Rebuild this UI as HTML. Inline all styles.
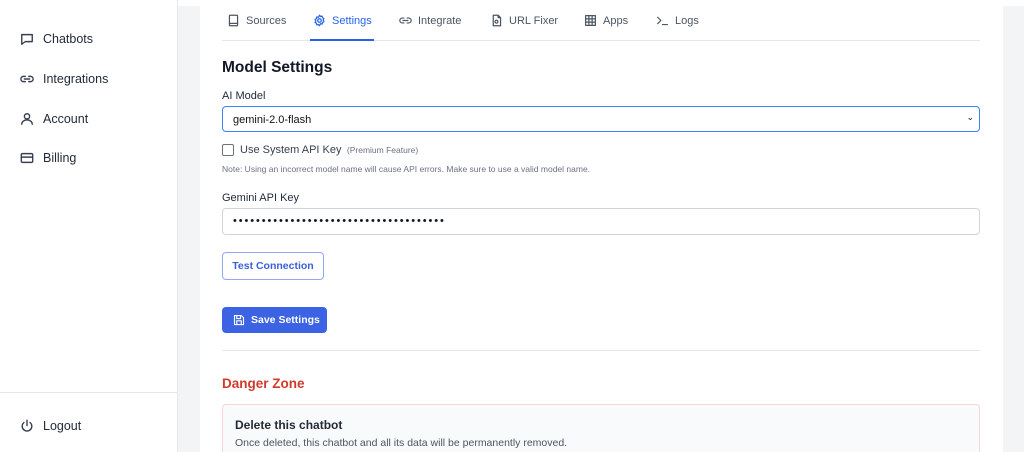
<!DOCTYPE html>
<html><head><style>
*{box-sizing:border-box;margin:0;padding:0}
html,body{width:1024px;height:452px;overflow:hidden}
body{background:#f3f4f6;font-family:"Liberation Sans",sans-serif;color:#111827;position:relative}
.side{position:absolute;left:0;top:0;width:178px;height:452px;background:#fff;border-right:1px solid #e5e7eb}
.nav{position:absolute;left:20px;font-size:12.5px;color:#1f2937;display:flex;align-items:center;gap:9px}
.nav svg{width:14px;height:14px;fill:none;stroke:#374151;stroke-width:1.6;stroke-linecap:round;stroke-linejoin:round}
.topstrip{position:absolute;left:178px;top:0;width:846px;height:6px;background:#fff}
.card{position:absolute;left:200px;top:6px;width:803px;height:446px;background:#fff;overflow:hidden}
.tabs{position:absolute;left:22px;top:0;width:758px;height:35px;border-bottom:1px solid #e5e7eb}
.tab{position:absolute;top:8px;font-size:11px;color:#4b5563;display:flex;align-items:center;gap:6px}
.tab svg{width:13px;height:13px;fill:none;stroke:#4b5563;stroke-width:1.5;stroke-linecap:round;stroke-linejoin:round}
.abs{position:absolute}
</style></head><body>
<div class="side">
<div class="nav" style="top:32px"><svg viewBox="0 0 16 16"><path d="M2 3h12v8H6l-4 3z"/></svg>Chatbots</div>
<div class="nav" style="top:72px"><svg viewBox="0 0 16 16"><path d="M6 5H4a3 3 0 0 0 0 6h2M10 5h2a3 3 0 0 1 0 6h-2M5 8h6"/></svg>Integrations</div>
<div class="nav" style="top:112px"><svg viewBox="0 0 16 16"><circle cx="8" cy="5" r="3"/><path d="M2 14c0-3 3-5 6-5s6 2 6 5"/></svg>Account</div>
<div class="nav" style="top:151px"><svg viewBox="0 0 16 16"><rect x="1.5" y="3" width="13" height="10" rx="1.5"/><path d="M1.5 7h13"/></svg>Billing</div>
<div style="position:absolute;left:0;top:392px;width:177px;border-top:1px solid #e5e7eb"></div>
<div class="nav" style="top:419px"><svg viewBox="0 0 16 16"><path d="M8 1.5v6M4.5 4a5.5 5.5 0 1 0 7 0"/></svg>Logout</div>
</div>
<div class="topstrip"></div>
<div class="card">
<div class="tabs">
<div class="tab" style="left:5px"><svg viewBox="0 0 16 16"><rect x="3" y="1.5" width="10" height="13" rx="1"/><path d="M3 11.5h10"/></svg>Sources</div>
<div class="tab" style="left:91px;color:#2563eb"><svg viewBox="0 0 16 16" style="stroke:#2563eb"><circle cx="8" cy="8" r="2.2"/><path d="M8 1.5l1.3 1.6 2-.5.4 2 1.8 1-1 1.9 1 1.9-1.8 1-.4 2-2-.5L8 14.5l-1.3-1.6-2 .5-.4-2-1.8-1 1-1.9-1-1.9 1.8-1 .4-2 2 .5z"/></svg>Settings</div>
<div style="position:absolute;left:88px;top:33px;width:64px;height:2px;background:#2563eb"></div>
<div class="tab" style="left:177px"><svg viewBox="0 0 16 16"><path d="M6 5H4a3 3 0 0 0 0 6h2M10 5h2a3 3 0 0 1 0 6h-2M5 8h6"/></svg>Integrate</div>
<div class="tab" style="left:268px"><svg viewBox="0 0 16 16"><path d="M4 1.5h6l3 3v10H4zM10 1.5v3h3"/><circle cx="8" cy="9.5" r="1.8"/></svg>URL Fixer</div>
<div class="tab" style="left:362px"><svg viewBox="0 0 16 16"><rect x="2" y="2" width="12" height="12"/><path d="M2 6h12M2 10h12M6 2v12M10 2v12"/></svg>Apps</div>
<div class="tab" style="left:434px"><svg viewBox="0 0 16 16"><path d="M2 4l4 4-4 4M8 13h6"/></svg>Logs</div>
</div>
<div class="abs" style="left:22px;top:53px;font-size:15.5px;font-weight:bold">Model Settings</div>
<div class="abs" style="left:22px;top:84px;font-size:11px;color:#1f2937">AI Model</div>
<div class="abs" style="left:22px;top:100px;width:758px;height:26px;border:1px solid #3b82f6;border-radius:4px;font-size:11px;padding:7px 10px;color:#111">gemini-2.0-flash<span style="position:absolute;right:5px;top:5px;font-size:9px">&#8964;</span></div>
<div class="abs" style="left:22px;top:138px;width:12px;height:12px;border:1px solid #6b7280;border-radius:2px"></div>
<div class="abs" style="left:40px;top:138px;font-size:11px;color:#374151">Use System API Key <span style="font-size:8.5px;color:#6b7280">&nbsp;(Premium Feature)</span></div>
<div class="abs" style="left:22px;top:158px;font-size:8.5px;color:#6b7280">Note: Using an incorrect model name will cause API errors. Make sure to use a valid model name.</div>
<div class="abs" style="left:22px;top:186px;font-size:11px;color:#1f2937">Gemini API Key</div>
<div class="abs" style="left:22px;top:202px;width:758px;height:27px;border:1px solid #d1d5db;border-radius:4px;font-size:11px;line-height:25px;padding:0 10px;letter-spacing:1.9px">•••••••••••••••••••••••••••••••••••••</div>
<div class="abs" style="left:22px;top:246px;width:102px;height:28px;border:1px solid #93a8f5;border-radius:4px;font-size:10.5px;font-weight:bold;color:#3b5fd9;text-align:center;line-height:26px">Test Connection</div>
<div class="abs" style="left:22px;top:301px;width:105px;height:26px;background:#3b63e3;border-radius:4px;font-size:10.5px;font-weight:bold;color:#fff;line-height:26px;padding-left:29px"><svg viewBox="0 0 16 16" style="position:absolute;left:11px;top:7px;width:12px;height:12px;fill:none;stroke:#fff;stroke-width:1.5"><path d="M2 2h9l3 3v9H2zM5 2v4h5V2M5 14V9h6v5"/></svg>Save Settings</div>
<div class="abs" style="left:22px;top:344px;width:758px;border-top:1px solid #e5e7eb"></div>
<div class="abs" style="left:22px;top:370px;font-size:13.5px;font-weight:bold;color:#d03a2e">Danger Zone</div>
<div class="abs" style="left:22px;top:398px;width:758px;height:60px;border:1px solid #fbd5d5;border-radius:4px;background:#f9fafb"></div>
<div class="abs" style="left:35px;top:412px;font-size:12px;font-weight:bold;color:#1f2937">Delete this chatbot</div>
<div class="abs" style="left:35px;top:431px;font-size:10.5px;color:#4b5563">Once deleted, this chatbot and all its data will be permanently removed.</div>
</div>
</body></html>
